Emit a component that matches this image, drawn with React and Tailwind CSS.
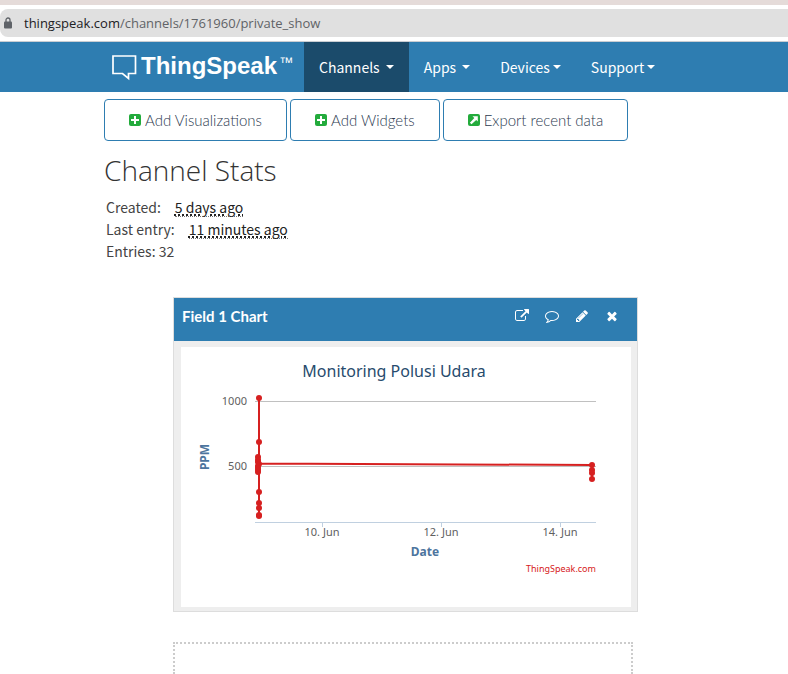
import React from "react";

const NAV_ITEMS = [
  { label: "Channels", active: true, spaced: true },
  { label: "Apps", active: false, spaced: true },
  { label: "Devices", active: false, spaced: false },
  { label: "Support", active: false, spaced: false },
];

const PANEL_ICONS = [
  {
    label: "Open chart in new window",
    path: "M1408 928v320q0 119-84.5 203.5t-203.5 84.5h-832q-119 0-203.5-84.5t-84.5-203.5v-832q0-119 84.5-203.5t203.5-84.5h704q14 0 23 9t9 23v64q0 14-9 23t-23 9h-704q-66 0-113 47t-47 113v832q0 66 47 113t113 47h832q66 0 113-47t47-113v-320q0-14 9-23t23-9h64q14 0 23 9t9 23zm384-864v512q0 26-19 45t-45 19-45-19l-176-176-652 652q-10 10-23 10t-23-10l-114-114q-10-10-10-23t10-23l652-652-176-176q-19-19-19-45t19-45 45-19h512q26 0 45 19t19 45z",
  },
  {
    label: "Comment",
    path: "M896 384q-204 0-381.5 69.5t-282 187.5-104.5 255q0 112 71.5 213.5t201.5 175.5l87 50-27 96q-24 91-70 172 152-63 275-171l43-38 57 6q69 8 130 8 204 0 381.5-69.5t282-187.5 104.5-255-104.5-255-282-187.5-381.5-69.5zm896 512q0 174-120 321.5t-326 233-450 85.5q-70 0-145-8-198 175-460 242-49 14-114 22h-5q-15 0-27-10.5t-16-27.5v-1q-3-4-.5-12t2-10 4.5-9.5l6-9 7-8.5 8-9q7-8 31-34.5t34.5-38 31-39.5 32.5-51 27-59 26-76q-157-89-247.5-220t-90.5-281q0-174 120-321.5t326-233 450-85.5 450 85.5 326 233 120 321.5z",
  },
  {
    label: "Edit",
    path: "M491 1536l91-91-235-235-91 91v107h128v128h107zm523-928q0-22-22-22-10 0-17 7l-542 542q-7 7-7 17 0 22 22 22 10 0 17-7l542-542q7-7 7-17zm-54-192l416 416-832 832h-416v-416zm683 96q0 53-37 90l-166 166-416-416 166-165q36-38 90-38 53 0 91 38l235 234q37 39 37 91z",
  },
  {
    label: "Close",
    path: "M1490 1322q0 40-28 68l-136 136q-28 28-68 28t-68-28l-294-294-294 294q-28 28-68 28t-68-28l-136-136q-28-28-28-68t28-68l294-294-294-294q-28-28-28-68t28-68l136-136q28-28 68-28t68 28l294 294 294-294q28-28 68-28t68 28l136 136q28 28 28 68t-28 68l-294 294 294 294q28 28 28 68z",
  },
];

// Marker positions, in the chart's own coordinates.
const POINTS = [
  [78, 51], [78, 95], [77, 110], [77, 113], [77, 115], [78, 117], [77, 119],
  [77, 121], [77, 123], [77, 125], [78, 145], [78, 156], [78, 161], [78, 168],
  [78, 169], [411, 118], [411, 123], [411, 126], [411, 132],
];

const X_TICKS = [
  { x: 141, label: "10. Jun" },
  { x: 260, label: "12. Jun" },
  { x: 379, label: "14. Jun" },
];

function Caret() {
  return <span className="border-x-4 border-t-4 border-x-transparent border-t-white" />;
}

function AddressBar() {
  return (
    <div className="border-t-[5px] border-b border-t-[#e5dbd9] border-b-[#c9cdd2] bg-white py-1">
      <div className="flex h-7 items-center gap-3 rounded-l-lg bg-[#e0e0e0] pl-1 font-['Open_Sans',sans-serif] text-[13px] text-[#606367]">
        <svg viewBox="0 0 8 12" className="h-3 w-2" aria-hidden="true">
          <path d="M2 6V3a2 2 0 0 1 4 0v3" fill="none" stroke="#5f6368" strokeWidth="1.3" />
          <rect y="4.5" width="8" height="7" rx="1" fill="#5f6368" />
        </svg>
        <span className="pt-0.5">
          <span className="text-[#202124]">thingspeak.com</span>/channels/1761960/private_show
        </span>
      </div>
    </div>
  );
}

function NavBar() {
  return (
    <header className="flex h-[50px] bg-[#2e7db1] pl-28 text-white">
      <a href="#home" className="flex w-48 items-start pt-3">
        <svg viewBox="0 0 25 26" className="mt-px h-[26px] w-[25px]" aria-hidden="true">
          <path d="M1 1H23.5V18.5H16.5V23.5L10.5 18.5H1Z" fill="none" stroke="#fff" strokeWidth="1.7" />
        </svg>
        <span className="pl-1 font-['Liberation_Sans',Arial,sans-serif] text-2xl leading-6 font-bold">
          ThingSpeak
        </span>
        <span className="pl-0.5 font-['Liberation_Sans',Arial,sans-serif] text-sm leading-4">™</span>
      </a>
      <nav className="flex font-['Noto_Sans_CJK_SC',sans-serif] text-sm">
        {NAV_ITEMS.map((item) => (
          <button
            key={item.label}
            type="button"
            className={
              "flex items-center px-[15px] " +
              (item.spaced ? "gap-1.5 " : "gap-[3px] ") +
              (item.active ? "bg-[#1b4b6b]" : "")
            }
          >
            {item.label}
            <Caret />
          </button>
        ))}
      </nav>
    </header>
  );
}

function ActionButton({ children, icon }) {
  return (
    <button
      type="button"
      className="flex h-[42px] items-center gap-1 rounded border border-[#2e7db1] px-6 font-[Lato,sans-serif] text-[15px] font-light text-[#2c3a50]"
    >
      <svg viewBox="0 0 12 12" className="size-3" aria-hidden="true">
        <rect width="12" height="12" rx="2" fill="#23ab3c" />
        {icon === "plus" ? (
          <path d="M6 2V10M2 6H10" stroke="#fff" strokeWidth="2" />
        ) : (
          <path d="M4.5 2.2H9.8V7.5L8.2 5.9L3.5 10.3L1.9 8.7L6.3 4Z" fill="#fff" />
        )}
      </svg>
      {children}
    </button>
  );
}

function Chart() {
  return (
    <svg viewBox="0 0 450 260" className="block w-full font-['Noto_Sans',sans-serif]" role="img" aria-label="Monitoring Polusi Udara">
      <text x="213" y="30" textAnchor="middle" fontSize="16" fill="#274b6d">Monitoring Polusi Udara</text>
      <path d="M74 54.5H415M74 119.5H415" stroke="#c0c0c0" />
      <path d="M74 175.5H415M141.5 175V180M260.5 175V180M379.5 175V180" stroke="#c0d0e0" />
      <g fontSize="11" fill="#606060">
        <text x="66" y="58" textAnchor="end">1000</text>
        <text x="66" y="123" textAnchor="end">500</text>
        {X_TICKS.map((tick) => (
          <text key={tick.label} x={tick.x} y="189" textAnchor="middle">{tick.label}</text>
        ))}
      </g>
      <text x="244" y="209" textAnchor="middle" fontSize="12" fontWeight="700" fill="#4d759e">Date</text>
      <text transform="translate(28 110) rotate(-90)" textAnchor="middle" fontSize="12" fontWeight="700" fill="#4d759e">PPM</text>
      <text x="415" y="225" textAnchor="end" fontSize="9" fill="#d62020">ThingSpeak.com</text>
      <path d="M78 51V169M77 111V125M78 116.5L411 118V132" fill="none" stroke="#d62020" strokeWidth="2" strokeLinejoin="round" />
      {POINTS.map(([x, y]) => (
        <circle key={x + "-" + y} cx={x} cy={y} r="3" fill="#d62020" />
      ))}
    </svg>
  );
}

function ChartPanel() {
  return (
    <section className="max-w-[465px] border border-[#dddddd] bg-[#eeeeee]">
      <div className="flex h-[43px] items-start justify-between bg-[#2e7db1] pt-2 pr-[18px] pl-2 text-white">
        <h2 className="font-[Lato,sans-serif] text-[15px] leading-5 font-bold">Field 1 Chart</h2>
        <div className="flex h-5 items-center gap-4">
          {PANEL_ICONS.map((icon) => (
            <button key={icon.label} type="button" aria-label={icon.label}>
              <svg viewBox="0 0 1792 1792" className="size-3.5" fill="currentColor" aria-hidden="true">
                <path d={icon.path} />
              </svg>
            </button>
          ))}
        </div>
      </div>
      <div className="mt-1.5 mr-1.5 mb-1 ml-[7px] bg-white">
        <Chart />
      </div>
    </section>
  );
}

export default function App() {
  return (
    <div className="bg-white">
      <AddressBar />
      <NavBar />
      <main className="px-[104px] pt-[7px]">
        <div className="flex flex-wrap gap-[3px]">
          <ActionButton icon="plus">Add Visualizations</ActionButton>
          <ActionButton icon="plus">Add Widgets</ActionButton>
          <ActionButton icon="arrow">Export recent data</ActionButton>
        </div>
        <h1 className="mt-[11px] font-['Open_Sans',sans-serif] text-[28px] leading-9 font-light text-[#333333]">
          Channel Stats
        </h1>
        <div className="mt-2 pl-0.5 font-['Noto_Sans_CJK_SC',sans-serif] text-sm leading-[22px] text-[#444444]">
          <p className="flex gap-3.5">
            Created:
            <abbr title="2022-06-09" className="h-[21px] border-b border-dotted border-[#777777] text-[#222222] underline decoration-dotted decoration-2">5 days ago</abbr>
          </p>
          <p className="flex gap-3.5">
            Last entry:
            <abbr title="2022-06-14" className="h-[21px] border-b border-dotted border-[#777777] text-[#222222] underline decoration-dotted decoration-2">11 minutes ago</abbr>
          </p>
          <p>Entries: 32</p>
        </div>
        <div className="mt-[35px] pl-[69px]">
          <ChartPanel />
          <div className="mt-[30px] h-8 max-w-[460px] border-2 border-b-0 border-dotted border-[#cccccc]" />
        </div>
      </main>
    </div>
  );
}
